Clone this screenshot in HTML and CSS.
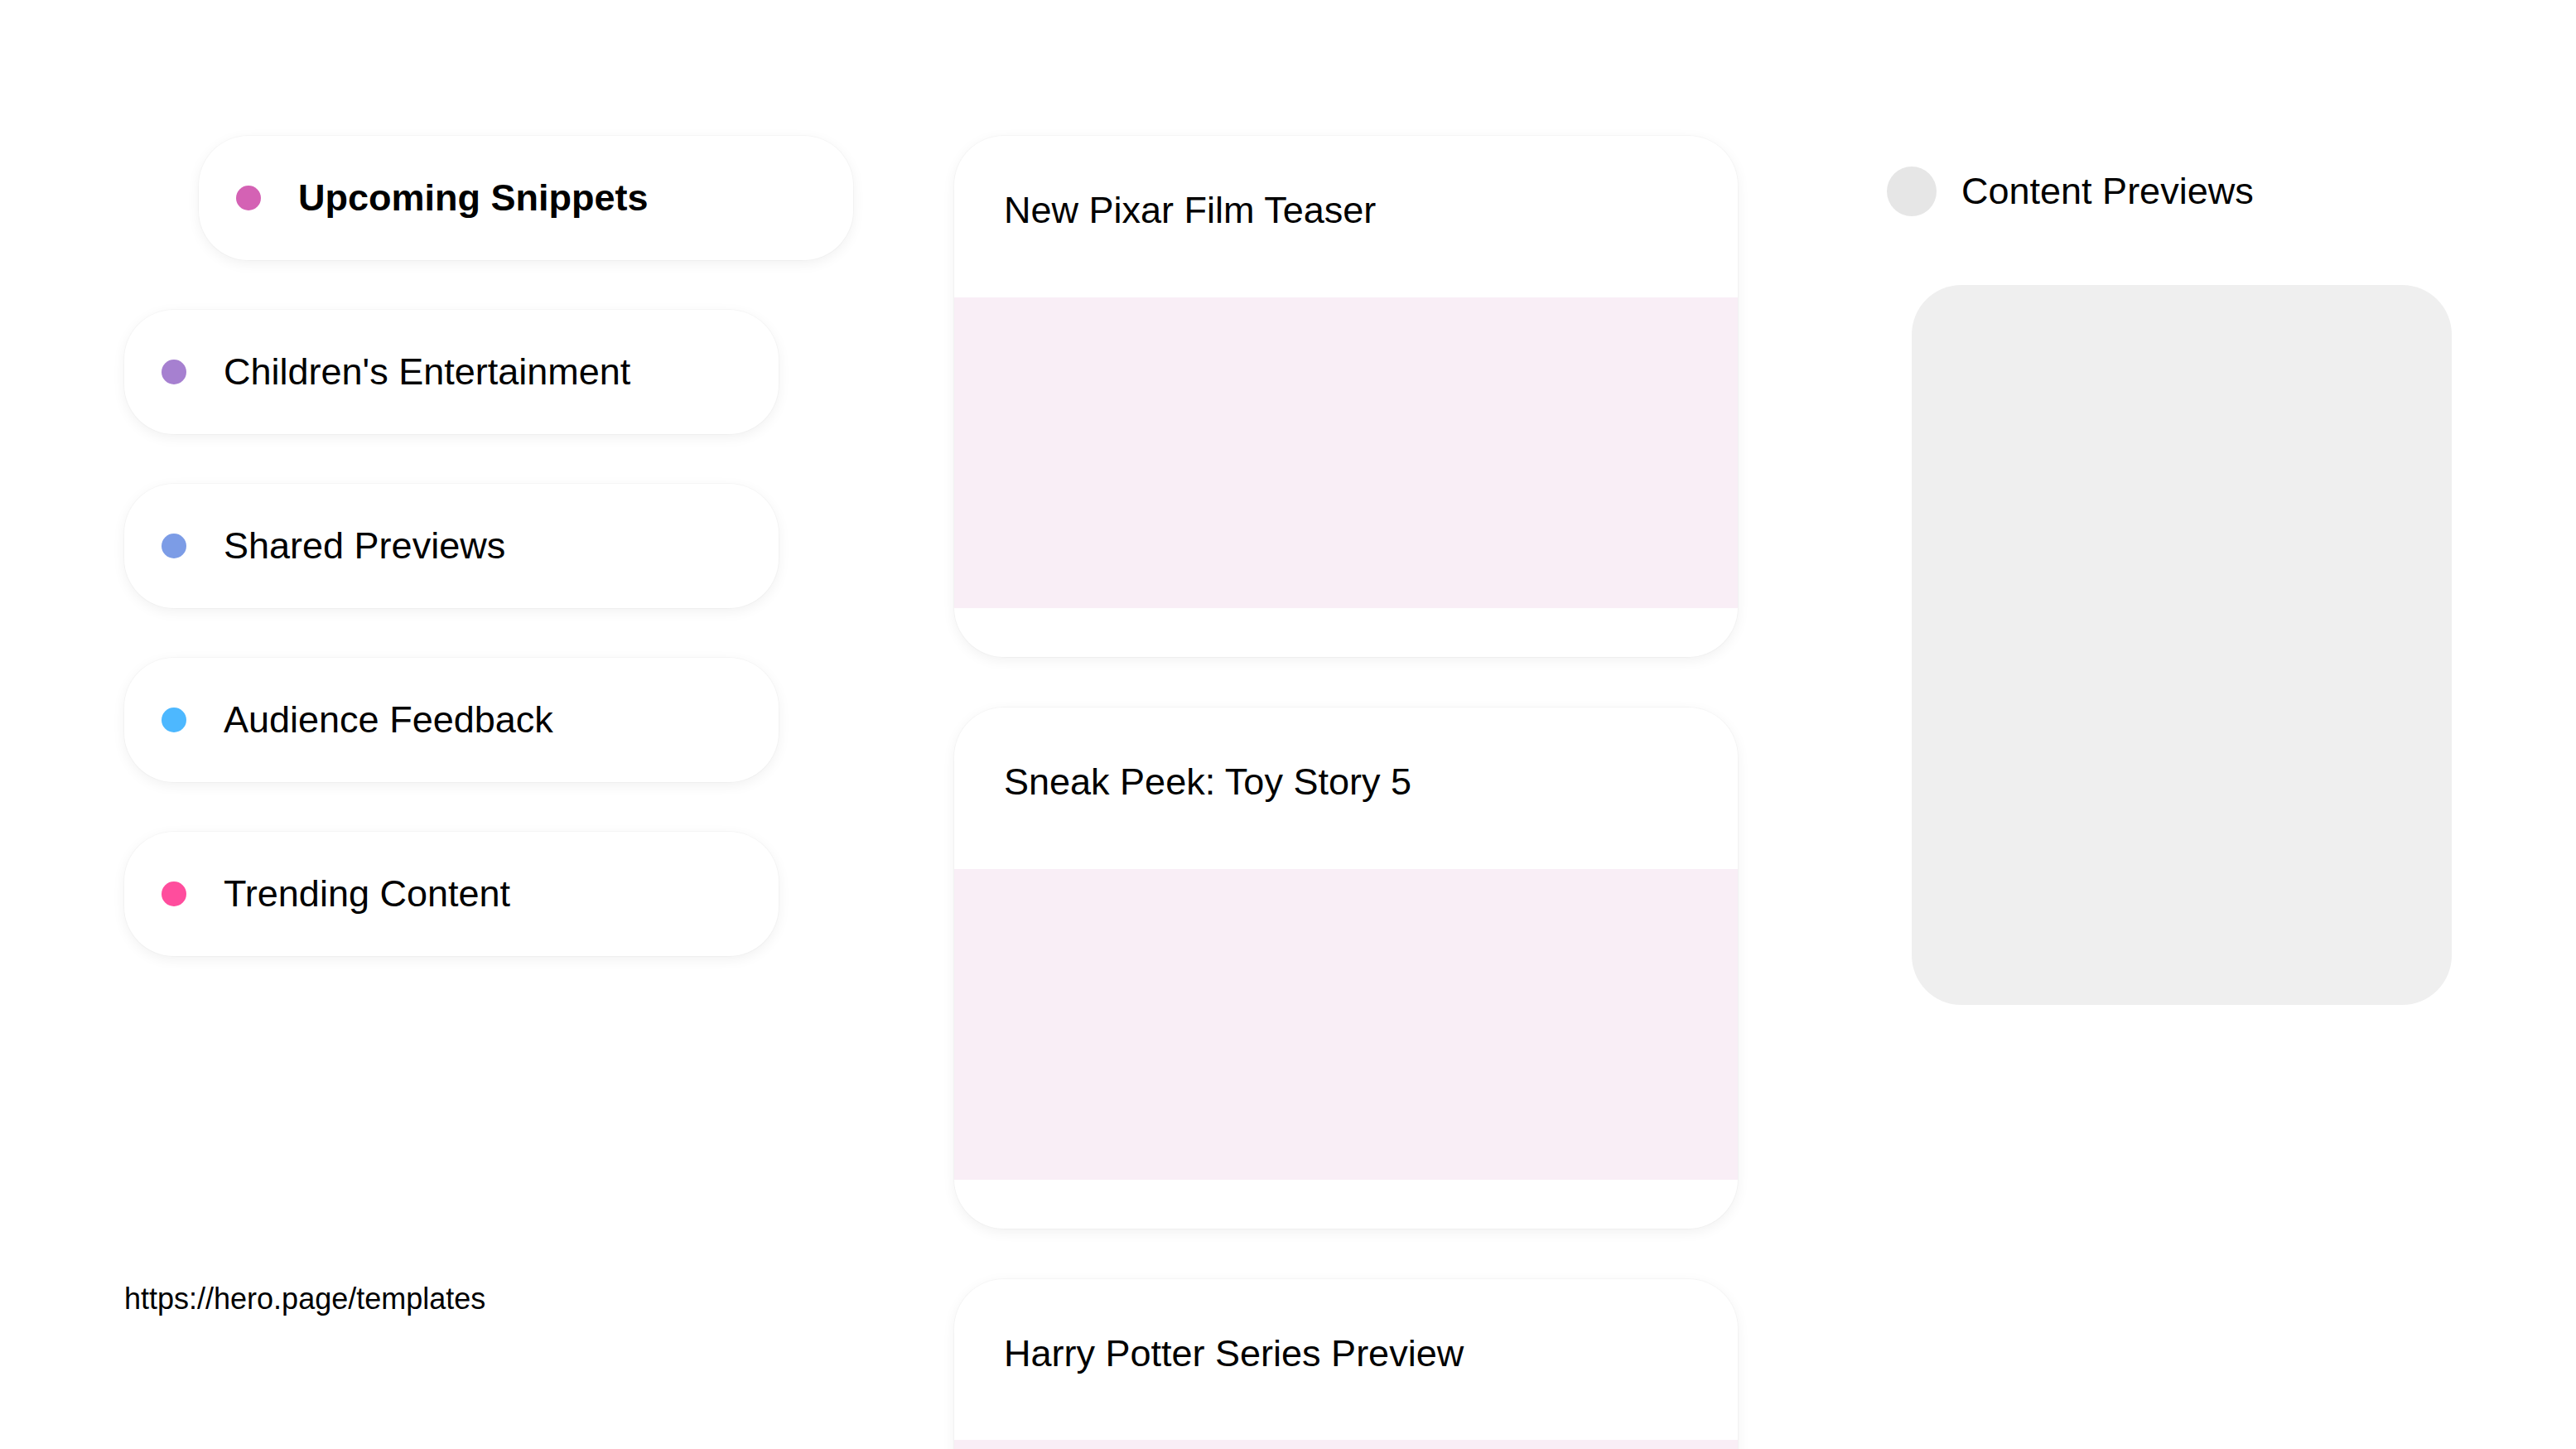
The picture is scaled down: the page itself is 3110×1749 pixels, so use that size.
FILE: index.html
```html
<!DOCTYPE html>
<html lang="en">
<head>
<meta charset="utf-8">
<title>Upcoming Snippets</title>
<link rel="stylesheet" href="styles.css">
</head>
<body>
<div class="page">
  <aside class="sidebar">
    <nav class="nav">
      <div class="pill pill-active"><span class="dot dot-upcoming"></span><span class="pill-label">Upcoming Snippets</span></div>
      <div class="pill"><span class="dot dot-children"></span><span class="pill-label">Children's Entertainment</span></div>
      <div class="pill"><span class="dot dot-shared"></span><span class="pill-label">Shared Previews</span></div>
      <div class="pill"><span class="dot dot-audience"></span><span class="pill-label">Audience Feedback</span></div>
      <div class="pill"><span class="dot dot-trending"></span><span class="pill-label">Trending Content</span></div>
    </nav>
    <div class="url">https://hero.page/templates</div>
  </aside>

  <main class="cards">
    <article class="card">
      <h3 class="card-title">New Pixar Film Teaser</h3>
      <div class="card-media"></div>
    </article>
    <article class="card">
      <h3 class="card-title">Sneak Peek: Toy Story 5</h3>
      <div class="card-media"></div>
    </article>
    <article class="card">
      <h3 class="card-title">Harry Potter Series Preview</h3>
      <div class="card-media"></div>
    </article>
  </main>

  <section class="preview">
    <div class="preview-head">
      <span class="preview-avatar"></span>
      <span class="preview-title">Content Previews</span>
    </div>
    <div class="preview-box"></div>
  </section>
</div>
</body>
</html>
```

FILE: styles.css
```css
html, body {
  margin: 0;
  padding: 0;
  background: #ffffff;
}

body {
  font-family: "Liberation Sans", Arial, Helvetica, sans-serif;
  color: #000000;
  height: 100vh;
  overflow: hidden;
}

.page {
  display: flex;
  align-items: flex-start;
  box-sizing: border-box;
  height: 100vh;
  overflow: hidden;
  padding: 164px 0 0 150px;
}

/* Left column */
.sidebar {
  width: 800px;
  flex: none;
  display: flex;
  flex-direction: column;
}

.nav {
  display: flex;
  flex-direction: column;
  gap: 60px;
}

.pill {
  width: 790px;
  height: 150px;
  box-sizing: border-box;
  display: flex;
  align-items: center;
  gap: 45px;
  padding: 0 45px;
  background: #ffffff;
  border-radius: 60px;
  box-shadow: 0 0 0 1px rgba(0, 0, 0, 0.025), 0 4px 16px rgba(0, 0, 0, 0.06);
}

.pill-active {
  margin-left: 90px;
}

.pill-active .pill-label {
  font-weight: 700;
}

.pill-label {
  font-size: 45px;
  line-height: 1.15;
}

.dot {
  width: 30px;
  height: 30px;
  border-radius: 50%;
  flex: none;
}

.dot-upcoming { background: #d462b4; }
.dot-children { background: #a680d0; }
.dot-shared { background: #7c9ce6; }
.dot-audience { background: #4db8ff; }
.dot-trending { background: #ff4d9d; }

.url {
  margin-top: 393px;
  font-size: 36px;
  line-height: 1.15;
}

/* Middle column */
.cards {
  width: 946px;
  flex: none;
  margin-left: 202px;
  display: flex;
  flex-direction: column;
  gap: 61px;
}

.card {
  background: #ffffff;
  border-radius: 60px;
  overflow: hidden;
  padding-bottom: 59px;
  box-shadow: 0 0 0 1px rgba(0, 0, 0, 0.025), 0 4px 16px rgba(0, 0, 0, 0.06);
}

.card-title {
  margin: 0;
  padding: 64px 60px 79px;
  font-size: 45px;
  font-weight: 400;
  line-height: 1.15;
}

.card-media {
  height: 375px;
  background: #f9eef6;
}

/* Right column */
.preview {
  width: 682px;
  flex: none;
  margin-left: 180px;
  padding-top: 37px;
}

.preview-head {
  display: flex;
  align-items: center;
  gap: 30px;
}

.preview-avatar {
  width: 60px;
  height: 60px;
  border-radius: 50%;
  background: #e6e6e6;
  flex: none;
}

.preview-title {
  font-size: 45px;
  line-height: 1.15;
}

.preview-box {
  margin: 83px 0 0 30px;
  width: 652px;
  height: 869px;
  border-radius: 60px;
  background: #efefef;
}
```
